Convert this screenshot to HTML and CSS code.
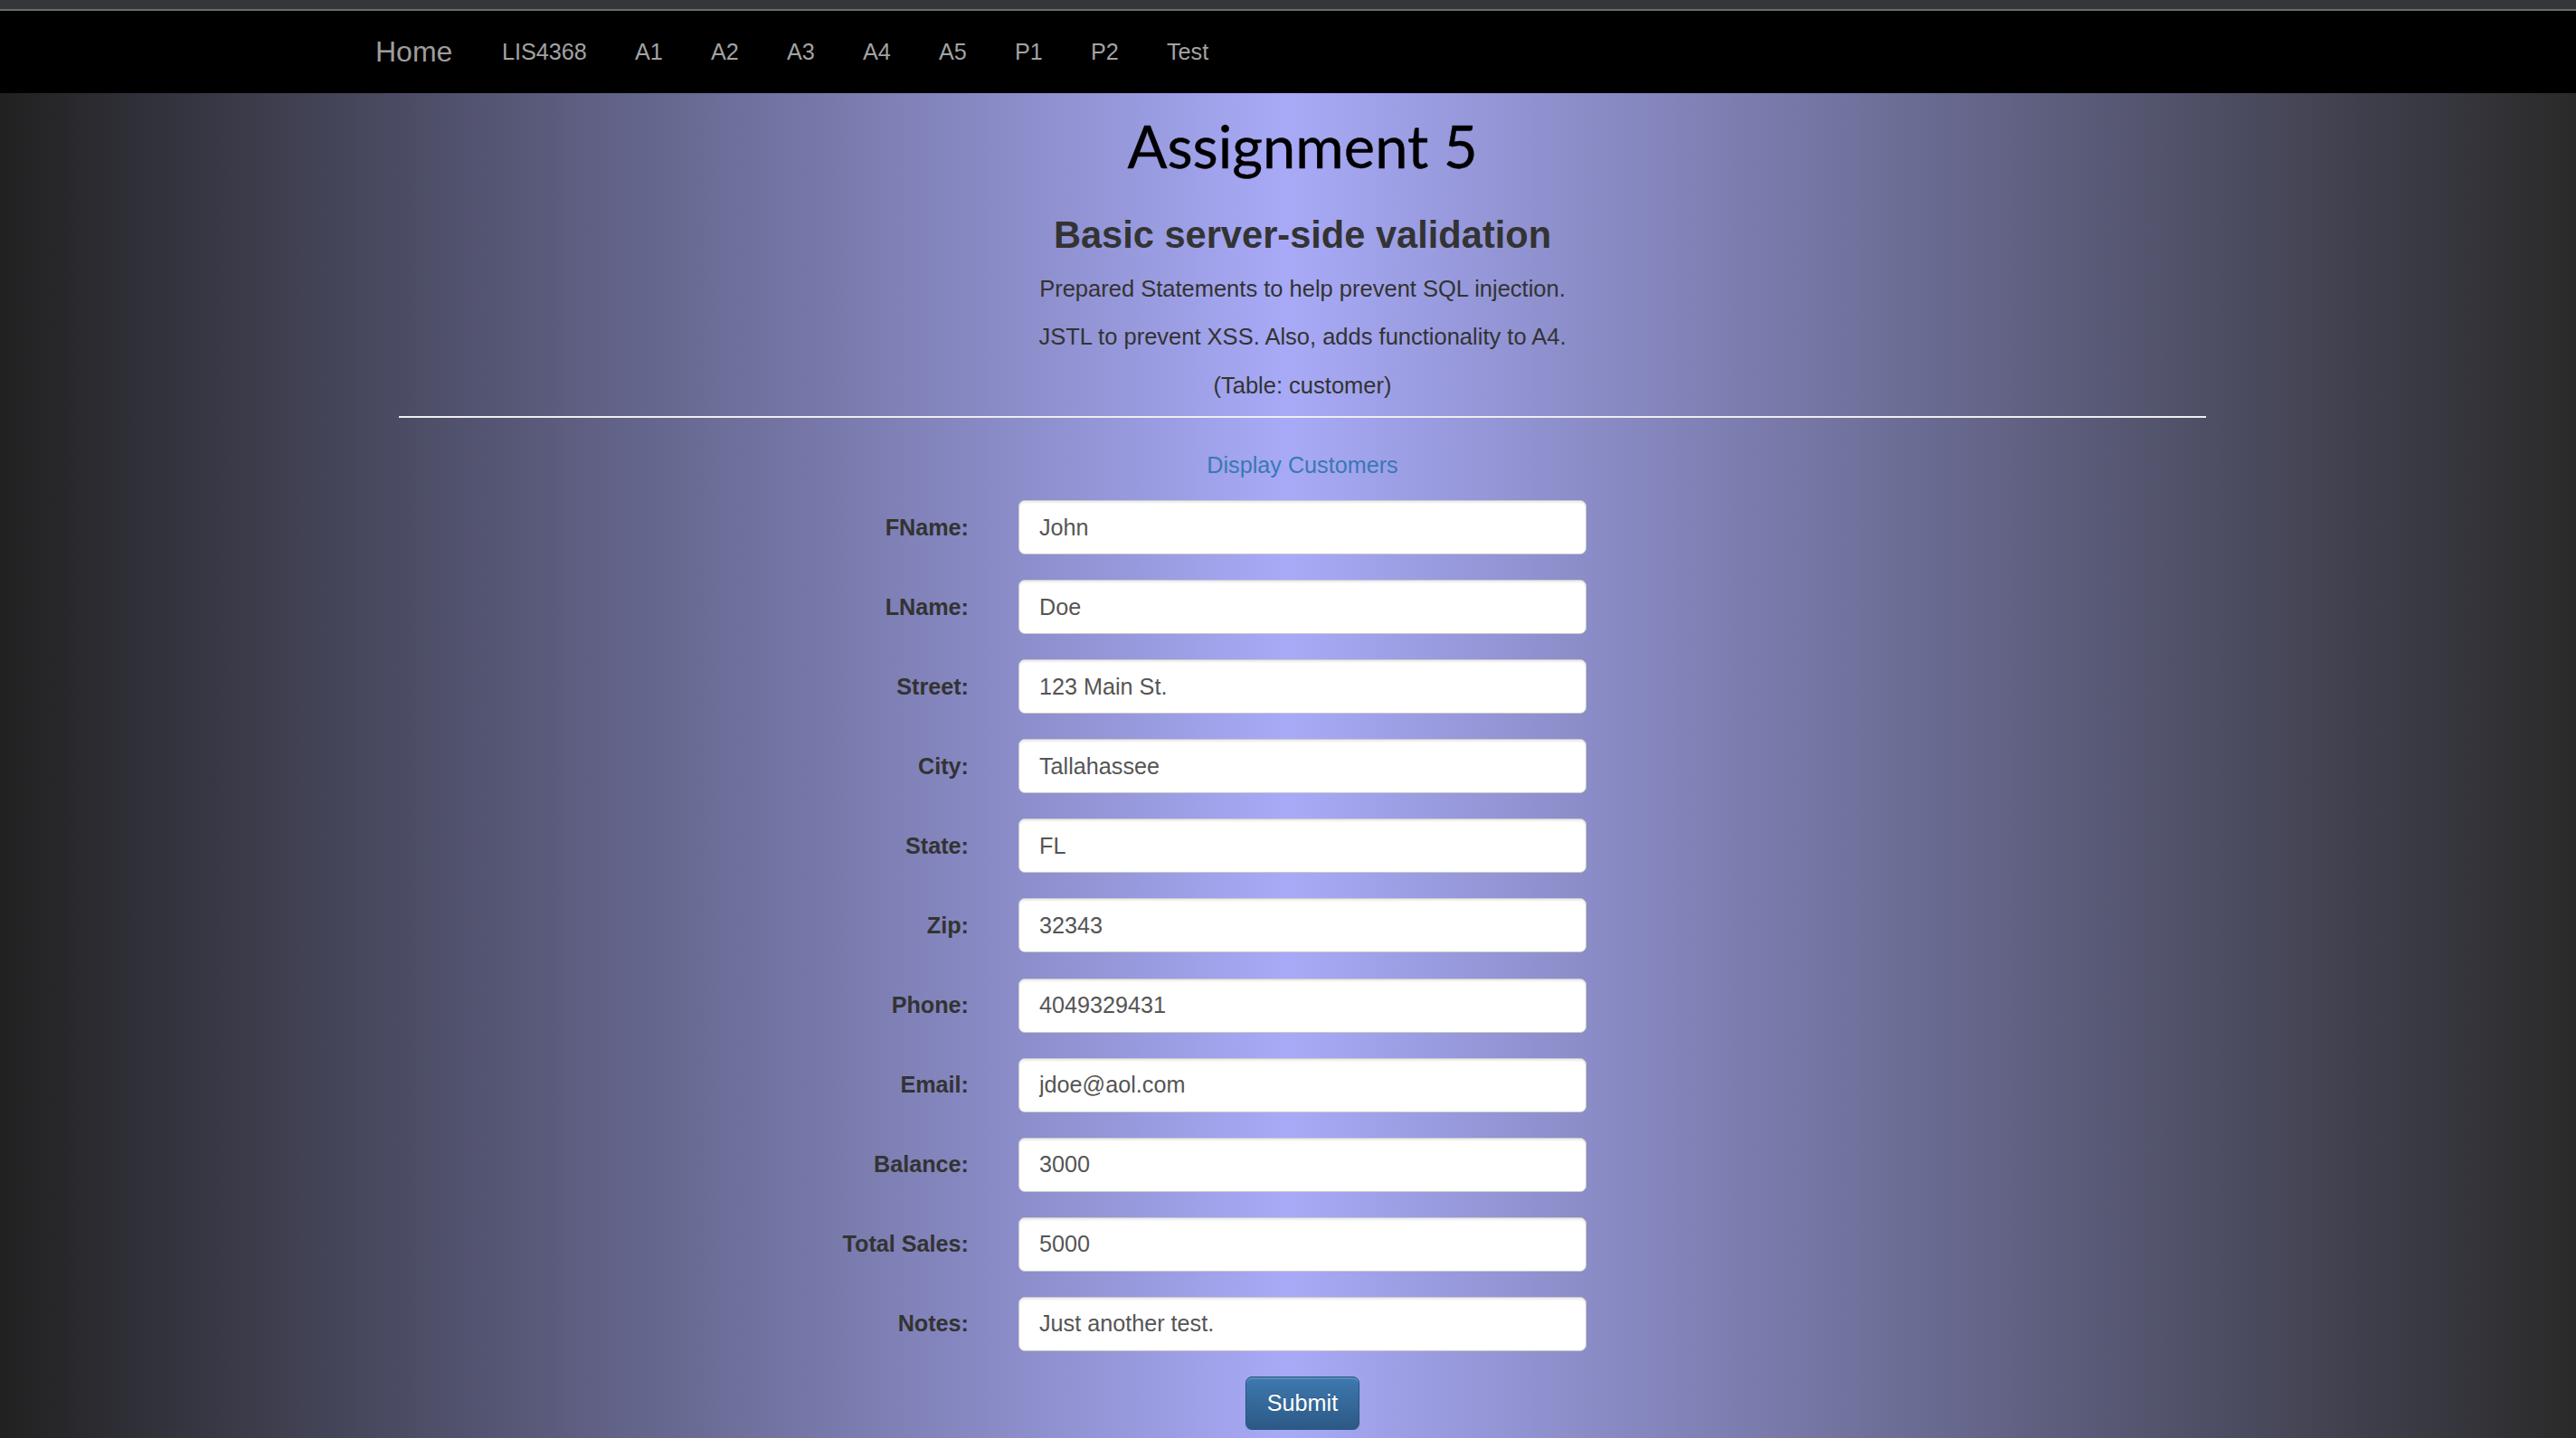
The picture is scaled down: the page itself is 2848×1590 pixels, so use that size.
FILE: index.html
```html
<!DOCTYPE html>
<html lang="en">
<head>
<meta charset="utf-8">
<title>Assignment 5</title>
<link rel="stylesheet" href="styles.css">
</head>
<body>
<div class="topbar"></div>
<nav class="navbar">
  <div class="nav-inner">
    <a class="brand" href="#">Home</a>
    <ul class="nav">
      <li><a href="#">LIS4368</a></li>
      <li><a href="#">A1</a></li>
      <li><a href="#">A2</a></li>
      <li><a href="#">A3</a></li>
      <li><a href="#">A4</a></li>
      <li><a href="#">A5</a></li>
      <li><a href="#">P1</a></li>
      <li><a href="#">P2</a></li>
      <li><a href="#">Test</a></li>
    </ul>
  </div>
</nav>
<main class="main">
  <div class="container">
    <div class="page-header">
      <h1 class="title">Assignment 5</h1>
      <h3 class="subtitle">Basic server-side validation</h3>
      <p class="lead-line">Prepared Statements to help prevent SQL injection.</p>
      <p class="lead-line">JSTL to prevent XSS. Also, adds functionality to A4.</p>
      <p class="lead-line">(Table: customer)</p>
    </div>
    <hr class="divider">
    <div class="display-link"><a href="#">Display Customers</a></div>
    <form class="form">
      <div class="form-row"><label class="form-label">FName:</label><input class="form-control" type="text" value="John"></div>
      <div class="form-row"><label class="form-label">LName:</label><input class="form-control" type="text" value="Doe"></div>
      <div class="form-row"><label class="form-label">Street:</label><input class="form-control" type="text" value="123 Main St."></div>
      <div class="form-row"><label class="form-label">City:</label><input class="form-control" type="text" value="Tallahassee"></div>
      <div class="form-row"><label class="form-label">State:</label><input class="form-control" type="text" value="FL"></div>
      <div class="form-row"><label class="form-label">Zip:</label><input class="form-control" type="text" value="32343"></div>
      <div class="form-row"><label class="form-label">Phone:</label><input class="form-control" type="text" value="4049329431"></div>
      <div class="form-row"><label class="form-label">Email:</label><input class="form-control" type="text" value="jdoe@aol.com"></div>
      <div class="form-row"><label class="form-label">Balance:</label><input class="form-control" type="text" value="3000"></div>
      <div class="form-row"><label class="form-label">Total Sales:</label><input class="form-control" type="text" value="5000"></div>
      <div class="form-row"><label class="form-label">Notes:</label><input class="form-control" type="text" value="Just another test."></div>
      <div class="form-actions"><button class="btn-primary" type="button">Submit</button></div>
    </form>
  </div>
</main>
</body>
</html>
```

FILE: styles.css
```css
html {
  height: 100%;
  background: linear-gradient(to right, #212121 0%, #a8aaf7 50%, #2a2a2a 100%);
}

body {
  margin: 0;
  font-family: "Liberation Sans", Arial, sans-serif;
  font-size: 25.2px;
  color: #333;
  overflow: hidden;
}

.topbar {
  height: 10px;
  background: #35363a;
  border-bottom: 2px solid #6b6b6b;
}

.navbar {
  background: #000;
  height: 91px;
  padding-left: 32px;
}

.nav-inner {
  box-sizing: border-box;
  width: 2106px;
  height: 100%;
  margin: 0 auto;
  padding: 0 27px 0 28px;
  display: flex;
  align-items: center;
}

.brand {
  font-size: 32px;
  color: #9d9d9d;
  text-decoration: none;
  padding-right: 28px;
}

.nav {
  list-style: none;
  margin: 0;
  padding: 0;
  display: flex;
}

.nav a {
  display: block;
  padding: 0 26.6px;
  font-size: 25.2px;
  color: #a3a3a3;
  text-decoration: none;
}

.main {
  padding-left: 32px;
}

.container {
  width: 1998px;
  margin: 0 auto;
}

.page-header {
  text-align: center;
}

.title {
  margin: 19px 0 0;
  font-family: Lato, "Open Sans", sans-serif;
  font-weight: 400;
  font-size: 65px;
  line-height: 78px;
  color: #000;
  -webkit-text-stroke: 0.4px #000;
}

.subtitle {
  margin: 35.5px 0 0;
  font-size: 41.6px;
  font-weight: 700;
  line-height: 48px;
  color: #333;
}

.lead-line {
  margin: 17px 0 0;
  font-size: 25.5px;
  line-height: 36px;
}

.lead-line + .lead-line {
  margin-top: 17.5px;
}

.divider {
  margin: 16px 0 0;
  border: 0;
  border-top: 2px solid #eeeeee;
}

.display-link {
  margin-top: 34px;
  text-align: center;
  line-height: 36px;
}

.display-link a {
  color: #3a78b5;
  text-decoration: none;
}

.form {
  margin-top: 21.5px;
}

.form-row {
  display: grid;
  grid-template-columns: 1fr 628px 1fr;
  align-items: center;
  height: 60px;
  margin-bottom: 28.1px;
}

.form-label {
  text-align: right;
  padding-right: 55px;
  font-weight: 700;
  color: #333;
}

.form-control {
  box-sizing: border-box;
  width: 628px;
  height: 60px;
  margin: 0;
  padding: 0 22px;
  border: 1px solid #cccccc;
  border-radius: 7px;
  background: #fff;
  box-shadow: inset 0 2px 2px rgba(0, 0, 0, 0.075);
  font-family: "Liberation Sans", Arial, sans-serif;
  font-size: 25.2px;
  color: #555;
}

.form-actions {
  display: flex;
  justify-content: center;
}

.btn-primary {
  box-sizing: border-box;
  width: 126px;
  height: 59px;
  padding: 0;
  border: 1px solid #245580;
  border-radius: 7px;
  background: linear-gradient(to bottom, #3e79b0 0%, #2c5985 100%);
  box-shadow: inset 0 2px 0 rgba(255, 255, 255, 0.15), 0 2px 2px rgba(0, 0, 0, 0.075);
  color: #fff;
  font-family: "Liberation Sans", Arial, sans-serif;
  font-size: 25.2px;
  text-shadow: 0 -1px 0 rgba(0, 0, 0, 0.2);
}
```
